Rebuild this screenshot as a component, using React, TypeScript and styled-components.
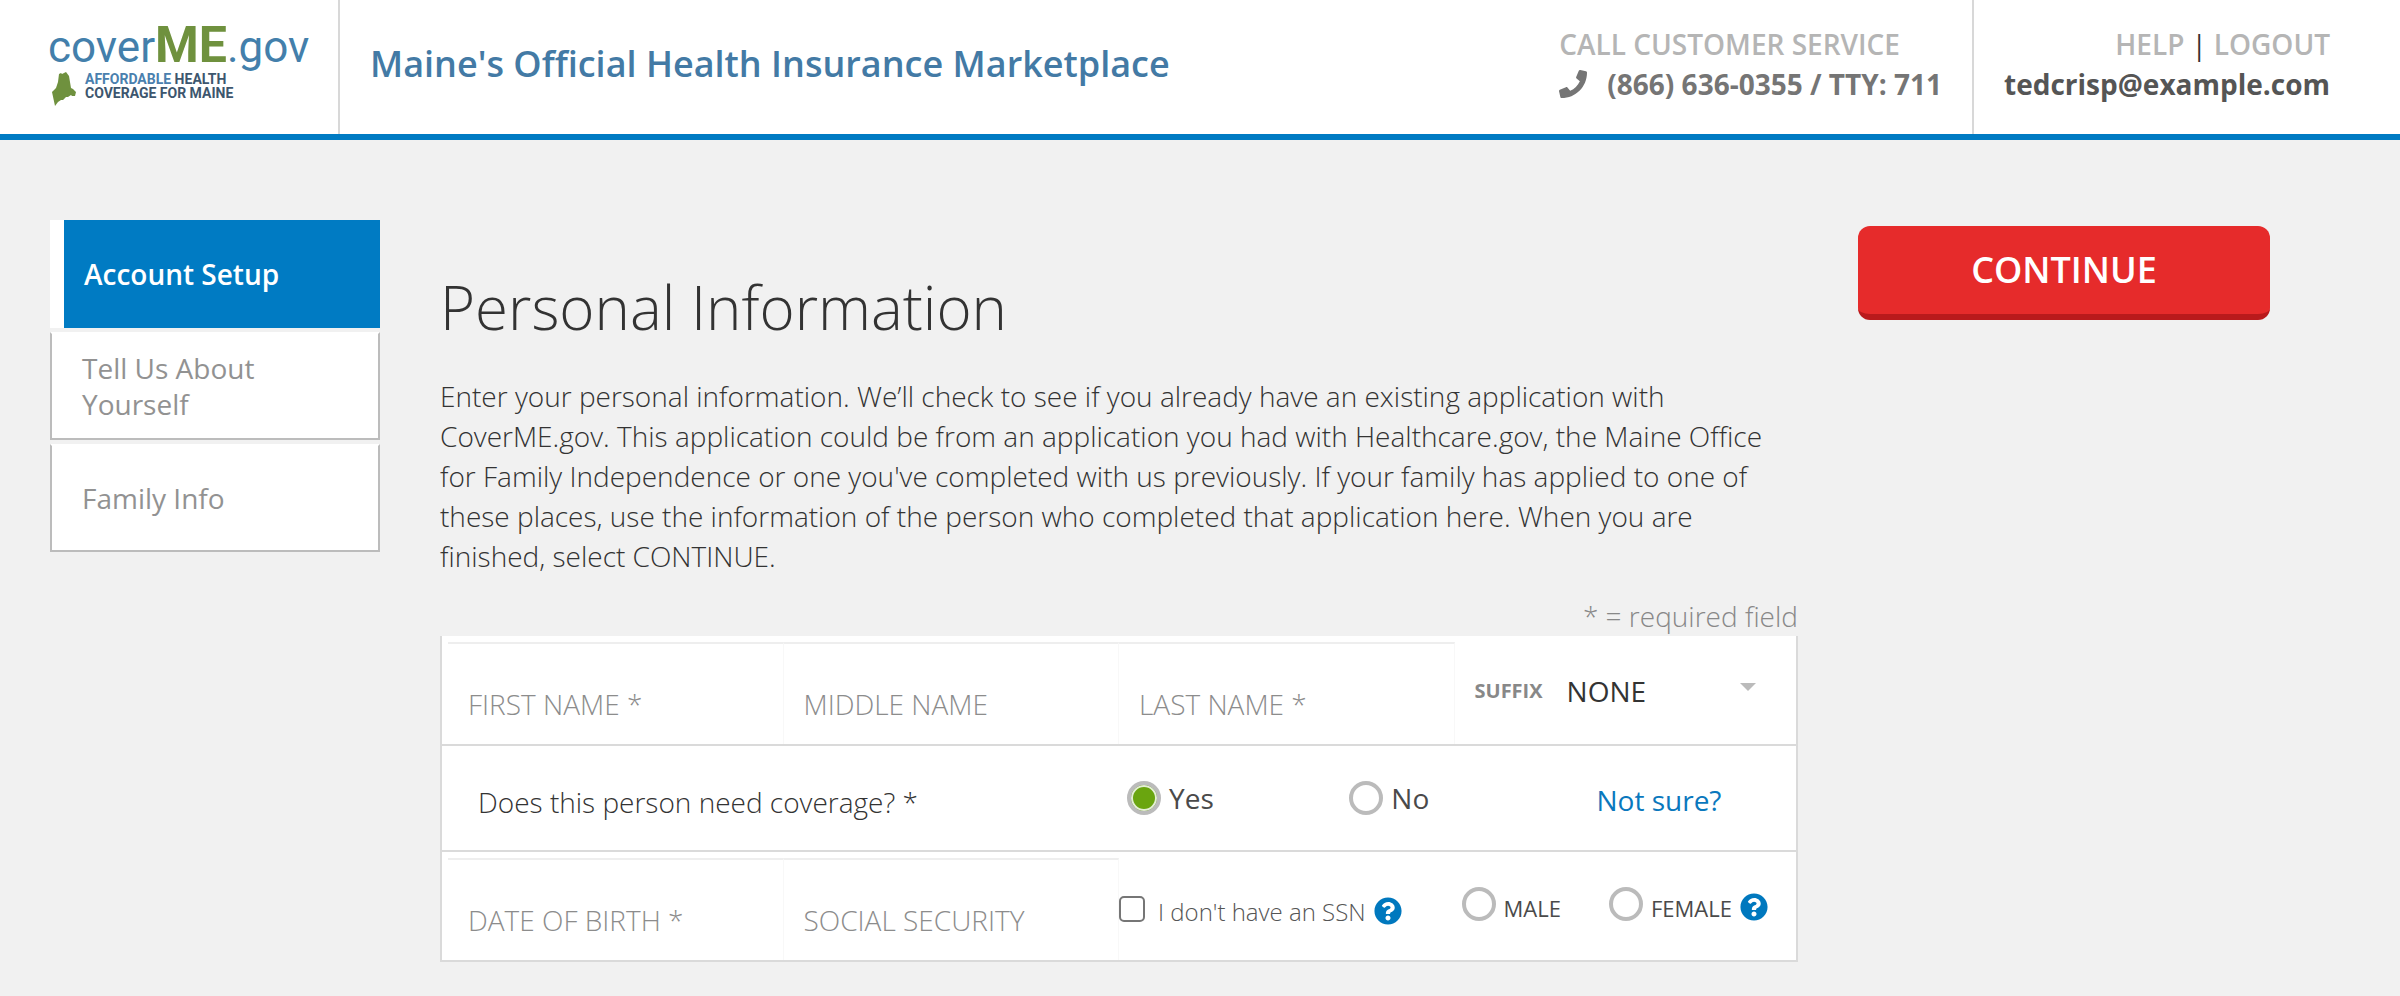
import React from "react";
import styled, { createGlobalStyle, css } from "styled-components";
import { FaPhone, FaQuestionCircle } from "react-icons/fa";

const GlobalStyle = createGlobalStyle`
  *, *::before, *::after { box-sizing: border-box; }
  body {
    margin: 0;
    min-height: 100vh;
    background: #f1f1f1;
    color: #333;
    font-family: "Open Sans", "Noto Sans", sans-serif;
    font-size: 28px;
    line-height: 40px;
  }
  h1, p { margin: 0; }
  a { color: inherit; text-decoration: none; }
  input, select, button { font: inherit; color: inherit; }
`;

const Header = styled.header`
  display: flex;
  align-items: stretch;
  height: 140px;
  background: #fff;
  border-bottom: 6px solid #007bc3;
`;

const Brand = styled.a`
  display: flex;
  flex-direction: column;
  width: 340px;
  padding: 20px 0 0 48px;
  border-right: 2px solid #d8d8d8;
`;

const Wordmark = styled.span`
  font-family: Roboto, sans-serif;
  font-size: 44px;
  line-height: 50px;
  color: #437fab;
  white-space: nowrap;
  b { font-size: 50px; color: #6f913e; }
`;

const TagRow = styled.span`
  display: flex;
  gap: 8px;
  margin-left: 4px;
`;

const Tagline = styled.span`
  font-family: Roboto, sans-serif;
  font-size: 14px;
  font-weight: 700;
  line-height: 14px;
  color: #3d566e;
  white-space: nowrap;
  em { font-style: normal; color: #4a80ae; }
`;

const SiteTitle = styled.div`
  flex: 1;
  padding: 40px 0 0 30px;
  font-size: 36px;
  font-weight: 600;
  line-height: 48px;
  color: #437aa5;
`;

const HeaderBlock = styled.div<{ $end?: boolean }>`
  padding: 24px ${(p) => (p.$end ? "70px 0 30px" : "30px 0 0")};
  text-align: ${(p) => (p.$end ? "right" : "left")};
  font-weight: 600;
  color: #b5b5b5;
  white-space: nowrap;
  ${(p) => p.$end && css`border-left: 2px solid #d8d8d8;`}
`;

const Bar = styled.span`
  margin: 0 7px;
  color: #333;
  font-weight: 400;
`;

const Strong = styled.div<{ $dark?: boolean }>`
  display: flex;
  align-items: center;
  gap: 20px;
  font-weight: 700;
  color: ${(p) => (p.$dark ? "#555" : "#757575")};
`;

const Layout = styled.div`
  display: flex;
  align-items: flex-start;
  gap: 60px;
  padding: 80px 130px 32px 50px;
`;

const Nav = styled.nav`
  flex: 0 0 330px;
  display: flex;
  flex-direction: column;
  gap: 4px;
`;

const NavItem = styled.a<{ $active?: boolean }>`
  display: flex;
  align-items: center;
  height: 108px;
  padding: 0 80px 0 30px;
  line-height: 36px;
  background: #fff;
  color: #929292;
  border: 2px solid #bcbcbc;
  border-top-color: #fff;
  ${(p) =>
    p.$active &&
    css`
      padding-left: 20px;
      border: 0;
      border-left: 14px solid #fff;
      background: #007bc3;
      color: #fff;
      font-weight: 600;
    `}
`;

const Main = styled.main`
  flex: 1;
  min-width: 0;
  padding-top: 46px;
`;

const Heading = styled.h1`
  font-size: 60px;
  font-weight: 300;
  line-height: 82px;
`;

const Intro = styled.p`
  margin-top: 28px;
  font-weight: 300;
`;

const Required = styled.p`
  margin-top: 20px;
  text-align: right;
  font-weight: 300;
  color: #888;
`;

const Form = styled.form`
  border: 2px solid #dadada;
  border-top: 0;
  background: #fff;
`;

const Row = styled.div<{ $height: number }>`
  display: grid;
  grid-template-columns: repeat(4, minmax(0, 1fr));
  height: ${(p) => p.$height}px;
  padding: 6px 6px 0;
  & + & { border-top: 2px solid #dadada; }
`;

const Field = styled.input`
  min-width: 0;
  width: 100%;
  height: 100%;
  padding: 20px 20px 0;
  border: 0;
  border-top: 2px solid #eee;
  border-right: 1px solid #f8f8f8;
  background: transparent;
  font-weight: 300;
  outline: 0;
  &::placeholder { color: #8c8c8c; opacity: 1; }
`;

const Suffix = styled.label`
  display: flex;
  align-items: center;
  gap: 24px;
  padding: 0 34px 4px 20px;
  font-size: 20px;
  font-weight: 700;
  color: #888;
`;

const SelectBox = styled.span`
  flex: 1;
  display: flex;
  align-items: center;
  &::after {
    content: "";
    margin-bottom: 8px;
    border: 8px solid transparent;
    border-top-color: #bbb;
    border-bottom: 0;
  }
`;

const Select = styled.select`
  flex: 1;
  appearance: none;
  padding: 0;
  border: 0;
  background: transparent;
  font-size: 28px;
  font-weight: 400;
  color: #333;
  outline: 0;
`;

const Question = styled.span`
  grid-column: span 2;
  align-self: center;
  padding: 2px 0 0 30px;
  font-weight: 300;
`;

const CoverageChoices = styled.div`
  display: grid;
  grid-template-columns: 2fr 1fr;
  align-items: center;
  padding: 0 0 6px 8px;
`;

const Choice = styled.label`
  display: flex;
  align-items: center;
  gap: 8px;
  color: #4a4a4a;
  white-space: nowrap;
`;

const Radio = styled.input.attrs({ type: "radio" })`
  appearance: none;
  flex: none;
  width: 34px;
  height: 34px;
  margin: 0;
  border: 4px solid #bbb;
  border-radius: 50%;
  background: #fff;
  &:checked {
    background: #6aa50f;
    box-shadow: inset 0 0 0 2px #e4eed6;
  }
`;

const CoverageChoice = styled(Choice)`
  &:last-child { padding-left: 4px; }
`;

const SmallChoice = styled(Choice)`
  font-size: 22px;
  ${Radio} { margin-bottom: 8px; }
`;

const NotSure = styled.a`
  align-self: center;
  padding: 0 0 2px 142px;
  color: #0a78bd;
`;

const SsnCell = styled.div`
  display: flex;
  align-items: center;
  gap: 8px;
  padding-top: 6px;
  white-space: nowrap;
`;

const SsnLabel = styled.label`
  display: flex;
  align-items: center;
  gap: 13px;
  font-size: 24px;
  font-weight: 300;
  color: #555;
`;

const Checkbox = styled.input.attrs({ type: "checkbox" })`
  appearance: none;
  width: 26px;
  height: 26px;
  margin: 0 0 6px;
  border: 2px solid #767676;
  border-radius: 5px;
  background: #fff;
`;

const SexCell = styled.div`
  display: flex;
  align-items: center;
  justify-content: space-between;
  padding: 0 22px 2px 7px;
`;

const FemaleGroup = styled.div`
  display: flex;
  align-items: center;
  gap: 8px;
`;

const HelpButton = styled.button`
  display: flex;
  padding: 0 0 2px;
  border: 0;
  background: none;
  color: #0078be;
  font-size: 28px;
`;

const Aside = styled.aside`
  flex: 0 0 412px;
  padding-top: 6px;
`;

const Continue = styled.button`
  width: 100%;
  height: 94px;
  padding: 0;
  border: 0;
  border-bottom: 6px solid #b91a1c;
  border-radius: 12px;
  background: #e62b2b;
  color: #fff;
  font-size: 36px;
  font-weight: 600;
`;

const MaineIcon = () => (
  <svg width="25" height="35" viewBox="0 0 25 35" fill="#6f913e" aria-hidden="true">
    <path d="M7 2l2-1 1 1 4-2 3 4 2 12 2 1 3 3-1 4-3 0-1-1-3 2-2 0-3 3-2 0-3 2-3 4-3-14 1-1 3-3 2-6z" />
  </svg>
);

export default function App() {
  return (
    <>
      <GlobalStyle />
      <Header>
        <Brand href="#">
          <Wordmark>cover<b>ME</b>.gov</Wordmark>
          <TagRow>
            <MaineIcon />
            <Tagline><em>AFFORDABLE</em> HEALTH<br />COVERAGE FOR MAINE</Tagline>
          </TagRow>
        </Brand>
        <SiteTitle>Maine's Official Health Insurance Marketplace</SiteTitle>
        <HeaderBlock>
          CALL CUSTOMER SERVICE
          <Strong><FaPhone />(866) 636-0355 / TTY: 711</Strong>
        </HeaderBlock>
        <HeaderBlock $end>
          <a href="#">HELP</a><Bar>|</Bar><a href="#">LOGOUT</a>
          <Strong $dark>tedcrisp@example.com</Strong>
        </HeaderBlock>
      </Header>
      <Layout>
        <Nav>
          <NavItem href="#" $active>Account Setup</NavItem>
          <NavItem href="#">Tell Us About Yourself</NavItem>
          <NavItem href="#">Family Info</NavItem>
        </Nav>
        <Main>
          <Heading>Personal Information</Heading>
          <Intro>
            Enter your personal information. We’ll check to see if you already have an existing application with
            CoverME.gov. This application could be from an application you had with Healthcare.gov, the Maine Office
            for Family Independence or one you've completed with us previously. If your family has applied to one of
            these places, use the information of the person who completed that application here. When you are
            finished, select CONTINUE.
          </Intro>
          <Required>* = required field</Required>
          <Form>
            <Row $height={108}>
              <Field placeholder="FIRST NAME *" aria-label="First name" />
              <Field placeholder="MIDDLE NAME" aria-label="Middle name" />
              <Field placeholder="LAST NAME *" aria-label="Last name" />
              <Suffix>
                SUFFIX
                <SelectBox>
                  <Select><option>NONE</option></Select>
                </SelectBox>
              </Suffix>
            </Row>
            <Row $height={106}>
              <Question>Does this person need coverage? *</Question>
              <CoverageChoices>
                <CoverageChoice><Radio name="coverage" defaultChecked />Yes</CoverageChoice>
                <CoverageChoice><Radio name="coverage" />No</CoverageChoice>
              </CoverageChoices>
              <NotSure href="#">Not sure?</NotSure>
            </Row>
            <Row $height={110}>
              <Field placeholder="DATE OF BIRTH *" aria-label="Date of birth" />
              <Field placeholder="SOCIAL SECURITY" aria-label="Social security" />
              <SsnCell>
                <SsnLabel><Checkbox />I don't have an SSN</SsnLabel>
                <HelpButton type="button" aria-label="Help with SSN"><FaQuestionCircle /></HelpButton>
              </SsnCell>
              <SexCell>
                <SmallChoice><Radio name="sex" />MALE</SmallChoice>
                <FemaleGroup>
                  <SmallChoice><Radio name="sex" />FEMALE</SmallChoice>
                  <HelpButton type="button" aria-label="Help with sex"><FaQuestionCircle /></HelpButton>
                </FemaleGroup>
              </SexCell>
            </Row>
          </Form>
        </Main>
        <Aside>
          <Continue type="button">CONTINUE</Continue>
        </Aside>
      </Layout>
    </>
  );
}
